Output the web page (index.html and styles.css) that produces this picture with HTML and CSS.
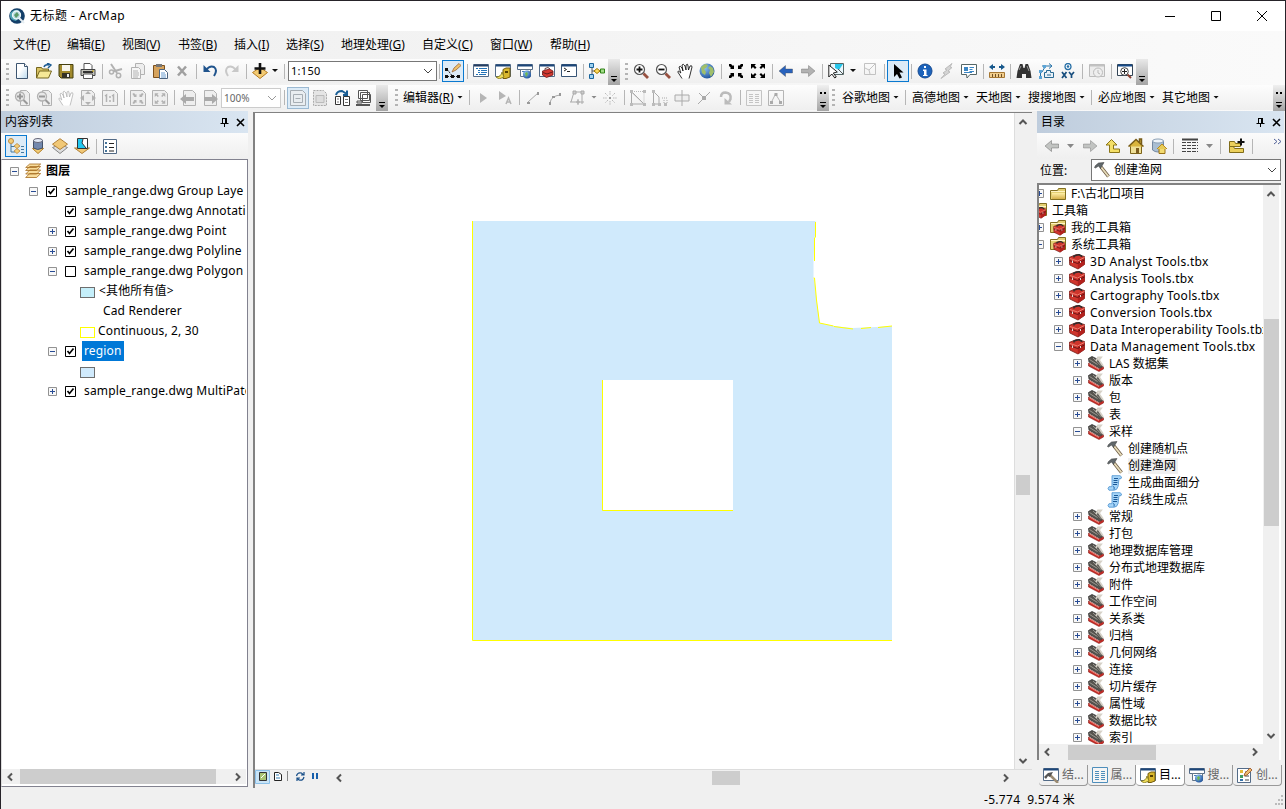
FILE: index.html
```html
<!DOCTYPE html>
<html lang="zh-CN">
<head>
<meta charset="utf-8">
<title>无标题 - ArcMap</title>
<link rel="stylesheet" href="styles.css">
</head>
<body>
<svg class="sprite" aria-hidden="true">
<defs>
<linearGradient id="gold" x1="0" y1="0" x2="0" y2="1"><stop offset="0" stop-color="#fff0a8"/><stop offset="1" stop-color="#d5b04a"/></linearGradient>
<linearGradient id="page" x1="0" y1="0" x2="1" y2="1"><stop offset=".4" stop-color="#fff"/><stop offset="1" stop-color="#b8d8ee"/></linearGradient>
<radialGradient id="globe" cx=".35" cy=".3" r=".8"><stop offset="0" stop-color="#8fc4f4"/><stop offset="1" stop-color="#174a94"/></radialGradient>
<symbol id="new" viewBox="0 0 16 16"><path d="M2.500 .5h8l3 3v12h-11z" fill="url(#page)" stroke="#3d5570"/><path d="M10.500 .5v3h3" fill="#fff" stroke="#3d5570"/></symbol>
<symbol id="open" viewBox="0 0 16 16"><path d="M.5 15V4.500h5l1 1.500h6v3" fill="#d9c364" stroke="#75661f"/><path d="M.5 15l3-7h12l-3 7z" fill="#f6e896" stroke="#75661f"/><path d="M8 4q1-3 5-2M11 0l4 2-3 3" fill="none" stroke="#1d5c94" stroke-width="1.500"/></symbol>
<symbol id="save" viewBox="0 0 16 16"><path d="M1 1.500h14v13.500H3l-2-2z" fill="#a18a2d" stroke="#45400f"/><path d="M4 2h8v6H4z" fill="#f7f5ed"/><path d="M4 10h8v5H4z" fill="#353326"/><path d="M9 11h2v3H9z" fill="#eee"/></symbol>
<symbol id="print" viewBox="0 0 16 16"><path d="M4 7V.5h6l2 2V7" fill="#fff" stroke="#555"/><path d="M1 6.500h14v6H1z" fill="#c4c4bc" stroke="#444"/><path d="M3 9h10" stroke="#333" stroke-width="2"/><path d="M3.500 11h9v4.500h-9z" fill="#fff" stroke="#555"/><path d="M12 8h2" stroke="#c8a400"/></symbol>
<symbol id="cut" viewBox="0 0 16 16"><path d="M3 1l6 9M14 6L5 8.500" fill="none" stroke="currentColor" stroke-width="2"/><circle cx="3.500" cy="9" r="2" fill="none" stroke="currentColor" stroke-width="1.500"/><circle cx="10.500" cy="12.500" r="2.200" fill="none" stroke="currentColor" stroke-width="1.500"/></symbol>
<symbol id="copy" viewBox="0 0 16 16"><path d="M5.500 .5h7l2 2v9h-9z" fill="#eee" stroke="currentColor"/><path d="M1.500 4.500h7l2 2v9h-9z" fill="#f6f6f6" stroke="currentColor"/><path d="M3 8h5M3 10h6M3 12h6M3 14h5" stroke="currentColor"/></symbol>
<symbol id="paste" viewBox="0 0 16 16"><path d="M1.500 2.500h11v12h-11z" fill="#d6a35d" stroke="#7c501d"/><path d="M4 1h6v3H4z" fill="#777"/><path d="M7.500 6.500h5l3 3v6h-8z" fill="#fff" stroke="#4c6480"/><path d="M9 10h4M9 12h5M9 14h5" stroke="#6d9ed0"/></symbol>
<symbol id="del" viewBox="0 0 16 16"><path d="M4 3.500l8 9M12 3.500l-8 9" stroke="#a0a0a0" stroke-width="2.500"/></symbol>
<symbol id="undo" viewBox="0 0 16 16"><path d="M1.500 2v7h7z" fill="#20548d"/><path d="M4 7q4-5 8-3 4 3 0 9" fill="none" stroke="#20548d" stroke-width="2"/></symbol>
<symbol id="redo" viewBox="0 0 16 16"><path d="M14.500 2v7h-7z" fill="#c8c8c8"/><path d="M12 7q-4-5-8-3-4 3 0 9" fill="none" stroke="#c8c8c8" stroke-width="2"/></symbol>
<symbol id="add" viewBox="0 0 16 16"><path d="M.5 9.500l7.500-5 7.500 5-7.500 6z" fill="#f3cb73" stroke="#b47c24"/><path d="M8 0v11M2.500 5.500h11" stroke="#111" stroke-width="2.600"/></symbol>
<symbol id="edit" viewBox="0 0 16 16"><path d="M2 6l6 8M2 13.500h12" fill="none" stroke="#222" stroke-dasharray="2 1"/><path d="M0 5h3v3H0zM0 12h3v3H0zM6 12h3v3H6zM12 12h3v3h-3z" fill="#111"/><path d="M7 9l2-4 5-4.500 2 2L11 7z" fill="#f0c36b" stroke="#9a6639" stroke-width=".8"/></symbol>
<symbol id="toc" viewBox="0 0 16 16"><path d="M.5 1.500h15v12H.5z" fill="#fff" stroke="#536b88"/><path d="M1 2.500h14" stroke="#243d61" stroke-width="2"/><path d="M3 5.500h2M6 5.500h8M5 7.500h2M8 7.500h6M5 9.500h2M8 9.500h6M3 11.500h2M6 11.500h7" stroke="#2474b8"/></symbol>
<symbol id="catalog" viewBox="0 0 16 16"><path d="M.5 1.500h15v12H.5z" fill="#fff" stroke="#536b88"/><path d="M1 2.500h14" stroke="#1d4679" stroke-width="2"/><path d="M8 6.500l3-1.500h4v9l-4 1.500H8z" fill="#d9b72d" stroke="#735b0c"/><path d="M1 14q5 0 6-5l2 5-5 2z" fill="#f0de5c" stroke="#7e721b" stroke-width=".8"/><path d="M10 8h3v2h-3z" fill="#554000"/></symbol>
<symbol id="search" viewBox="0 0 16 16"><path d="M.5 1.500h15v5H.5z" fill="#fff" stroke="#536b88"/><path d="M1 2.500h14" stroke="#1d4679" stroke-width="2"/><path d="M3.500 6.500h10v7h-10z" fill="#fff" stroke="#637487"/><path d="M5 8.500h7" stroke="#4980b7"/><circle cx="10" cy="11.500" r="4" fill="url(#globe)"/><path d="M8 10l2-1 1 2-2 3z" fill="#70b850"/></symbol>
<symbol id="toolwin" viewBox="0 0 16 16"><path d="M.5 1.500h15v12H.5z" fill="#fff" stroke="#536b88"/><path d="M1 2.500h14" stroke="#1d4679" stroke-width="2"/><path d="M3.500 8l7-2 3.500 2v4l-6.500 2.500-4-2.500z" fill="#d43830" stroke="#6b1716" stroke-width=".8"/><path d="M4 9.500l4 1.500 5.500-2M6 7V5.500l3-1L11 6" fill="none" stroke="#461717" stroke-width=".8"/></symbol>
<symbol id="python" viewBox="0 0 16 16"><path d="M.5 1.500h15v12H.5z" fill="#fff" stroke="#375476"/><path d="M1 2.500h14" stroke="#1d4679" stroke-width="2"/><path d="M3 5l2.500 1.500L3 8M6 8.500h3" fill="none" stroke="#222"/></symbol>
<symbol id="model" viewBox="0 0 16 16"><path d="M3 3v10M3 8h9" fill="none" stroke="#555"/><path d="M.5 .5h4v4h-4zM.5 11.500h4v4h-4z" fill="#9ed2f2" stroke="#19649c"/><path d="M5 8l3-2.500L11 8l-3 2.500z" fill="#ffdc5d" stroke="#9e7600"/><path d="M11.500 6h4v4h-4z" fill="#a2dd88" stroke="#308317"/></symbol>
<symbol id="zoomin" viewBox="0 0 16 16"><path d="M10.500 10.500l4.500 4.500" stroke="#985140" stroke-width="2.800"/><circle cx="6.500" cy="6.500" r="5" fill="#fff" stroke="#555" stroke-width="1.200"/><path d="M3.500 6.500h6M6.500 3.500v6" stroke="#111" stroke-width="1.800"/></symbol>
<symbol id="zoomout" viewBox="0 0 16 16"><path d="M10.500 10.500l4.500 4.500" stroke="#985140" stroke-width="2.800"/><circle cx="6.500" cy="6.500" r="5" fill="#fff" stroke="#555" stroke-width="1.200"/><path d="M3.500 6.500h6" stroke="#111" stroke-width="1.800"/></symbol>
<symbol id="hand" viewBox="0 0 16 16"><path d="M5 15.500L.8 9q0-2 3 1L2 4q1-2 3 1l1 3-1-6q1-2 3 1l1 4V2q2-2 2 1l.5 4L13 3q2-1 2 1l-2 8-1 3.500" fill="#fff" stroke="currentColor" stroke-width=".8"/></symbol>
<symbol id="world" viewBox="0 0 16 16"><circle cx="8" cy="8" r="7.500" fill="url(#globe)"/><path d="M2 4l4-3 3 1-2 3-2 1 2 3-1 3-3-2zM11 3l3 2 1 4-3 5-2-4 1-3-2-2z" fill="#a0bf6a"/></symbol>
<symbol id="shrink" viewBox="0 0 16 16"><path d="M1 1h2l2 2 1-1v4H2l1-1-2-2zM15 1h-2l-2 2-1-1v4h4l-1-1 2-2zM1 15h2l2-2 1 1v-4H2l1 1-2 2zM15 15h-2l-2-2-1 1v-4h4l-1 1 2 2z" fill="currentColor"/></symbol>
<symbol id="grow" viewBox="0 0 16 16"><path d="M1 1h5L4.500 2.500l2 2-1.500 1.500-2-2L1 6zM15 1h-5l1.500 1.500-2 2L11 6l2-2L15 6zM1 15h5l-1.500-1.500 2-2L5 10l-2 2L1 10zM15 15h-5l1.500-1.500-2-2L11 10l2 2 2-2z" fill="currentColor"/></symbol>
<symbol id="back" viewBox="0 0 16 16"><path d="M1 8l6.500-5.500v3.500h7v4h-7v3.500z" fill="currentColor" stroke="#3a3a3a" stroke-opacity=".35"/></symbol>
<symbol id="fwd" viewBox="0 0 16 16"><path d="M15 8L8.500 2.500v3.500h-7v4h7v3.500z" fill="currentColor" stroke="#444" stroke-opacity=".3"/></symbol>
<symbol id="select" viewBox="0 0 16 16"><path d="M2.500 .5h13v11h-13z" fill="#eaf6fb" stroke="#566"/><path d="M7 1h8l-4 6-4-2z" fill="#27c5e9"/><path d="M10 6l5 5" stroke="#555"/><path d="M.8 2v12l3-3 3 4 1.500-1-3-4 4-1z" fill="#fff" stroke="#222"/></symbol>
<symbol id="clear" viewBox="0 0 16 16"><path d="M2.500 .5h11v11h-11zM3 5l4 2 1 4M7 7l6-6" fill="none" stroke="#c2c2c2"/></symbol>
<symbol id="cursor" viewBox="0 0 16 16"><path d="M4 1v13l3-3 2.500 4.500 2.500-1-2.500-5h4z" fill="currentColor"/></symbol>
<symbol id="info" viewBox="0 0 16 16"><circle cx="8" cy="8" r="7" fill="#1c63bb" stroke="#164a91"/><path d="M7 3h2v2H7zM6 6.500h3.500V12h1v1H6v-1h1V8H6z" fill="#fff"/></symbol>
<symbol id="bolt" viewBox="0 0 16 16"><path d="M13 .5L6 6l2 1-4 3 2 1-4 4.500L11 9 9 8l4-3.500-2-.5z" fill="#d4d4d4" stroke="#bbb"/></symbol>
<symbol id="popup" viewBox="0 0 16 16"><path d="M.5 1.500h15v10H9l-3 3.500-.5-3.500h-5z" fill="#fff" stroke="#566"/><path d="M3 4h4v4H3z" fill="#3b86c4"/><path d="M8.500 4.500H13M8.500 6.500h3M8.500 8.500H13M3 9.500h8" stroke="#3b86c4"/></symbol>
<symbol id="measure" viewBox="0 0 16 16"><path d="M0 4l4-3v2h2v2H4v2zM16 4l-4-3v2h-2v2h2v2z" fill="#17588c"/><path d="M.5 9.500h15v5H.5z" fill="#f1cd8c" stroke="#a67732"/><path d="M3.500 14v-3M6.500 14v-3M9.500 14v-3M12.500 14v-3" stroke="#715025"/></symbol>
<symbol id="find" viewBox="0 0 16 16"><path d="M.5 15l1-7L4 1h2.500l1 4h1l1-4H12l2.500 7 1 7H10v-4H6v4z" fill="#333"/><path d="M3 7l2-4M11 3l2 5" stroke="#999"/></symbol>
<symbol id="route" viewBox="0 0 16 16"><path d="M2.500 14V9M4 3h9M11 .5L14 3l-3 2.500M4 9l3-5" fill="none" stroke="#2470a6"/><path d="M1 7h3v3H1zM1 13h3v3H1zM5 2h3v3H5z" fill="#5ca5d7"/><path d="M6.500 9.500h2v-2h4v2h3v5h-9z" fill="#e8f1f8" stroke="#286992"/><path d="M9 12h4" stroke="#286992"/></symbol>
<symbol id="xy" viewBox="0 0 16 16"><circle cx="8" cy="3.500" r="3" fill="#fff" stroke="#276fa6" stroke-width="1.300"/><circle cx="8" cy="3.500" r="1.300" fill="#276fa6"/><path d="M2 9l4.500 6M6.500 9L2 15M9 9l2.500 3L14 9M11.500 12v3" fill="none" stroke="#174d7d" stroke-width="1.700"/></symbol>
<symbol id="time" viewBox="0 0 16 16"><path d="M.5 1.500h15v12H.5z" fill="#ececec" stroke="#bbb"/><path d="M1 2.500h14" stroke="#c2c2c2" stroke-width="2"/><circle cx="9" cy="9.500" r="4.500" fill="#eee" stroke="#bbb"/><path d="M9 7v3l2 1" fill="none" stroke="#bbb"/></symbol>
<symbol id="viewer" viewBox="0 0 16 16"><path d="M.5 1.500h15v11H.5z" fill="#fff" stroke="#345"/><path d="M1 2.500h14" stroke="#174a88" stroke-width="2"/><path d="M10.500 11.500L14 15" stroke="#8a4031" stroke-width="2"/><circle cx="7.500" cy="8.500" r="3.800" fill="#fff" stroke="#444"/><path d="M5 8.500h5M7.500 6v5" stroke="#222"/></symbol>
<symbol id="pgzin" viewBox="0 0 16 16"><path d="M6.500 .5h6l3 3v12h-9z" fill="#eee" stroke="currentColor"/><circle cx="6" cy="6.500" r="4.500" fill="#e8e8e8" stroke="currentColor" stroke-width="1.300"/><path d="M3 6.500h6M6 3.500v6M9.500 10l4 4" stroke="#999" stroke-width="2"/></symbol>
<symbol id="pgzout" viewBox="0 0 16 16"><path d="M6.500 .5h6l3 3v12h-9z" fill="#eee" stroke="currentColor"/><circle cx="6" cy="6.500" r="4.500" fill="#e8e8e8" stroke="currentColor" stroke-width="1.300"/><path d="M3 6.500h6M9.500 10l4 4" stroke="#999" stroke-width="2"/></symbol>
<symbol id="pgfull" viewBox="0 0 16 16"><path d="M1.500 .5h10l3 3v12h-13z" fill="#eee" stroke="currentColor"/><path d="M8 1l3 3H5zM8 15l3-3H5zM0 8l4-3v6zM16 8l-4-3v6z" fill="currentColor"/></symbol>
<symbol id="pg11" viewBox="0 0 16 16"><path d="M.5 .5h12l3 3v12H.5z" fill="#f0f0f0" stroke="currentColor"/><path d="M3 6l1.500-1v7M8 6v2M8 10v2M10 6l1.500-1v7" fill="none" stroke="currentColor" stroke-width="1.500"/></symbol>
<symbol id="pgshrink" viewBox="0 0 16 16"><path d="M.5 .5h12l3 3v12H.5z" fill="#eee" stroke="currentColor"/><svg x="2" y="2.500" width="12" height="12" viewBox="0 0 16 16"><use href="#shrink"/></svg></symbol>
<symbol id="pggrow" viewBox="0 0 16 16"><path d="M.5 .5h12l3 3v12H.5z" fill="#eee" stroke="currentColor"/><svg x="2" y="2.500" width="12" height="12" viewBox="0 0 16 16"><use href="#grow"/></svg></symbol>
<symbol id="pgback" viewBox="0 0 16 16"><path d="M3.500 .5h9l3 3v12h-12z" fill="#eee" stroke="currentColor"/><path d="M0 9l6-5v3h8v4H6v3z" fill="#aaa"/></symbol>
<symbol id="pgfwd" viewBox="0 0 16 16"><path d="M2.500 .5h9l3 3v12h-12z" fill="#eee" stroke="currentColor"/><path d="M16 9l-6-5v3H2v4h8v3z" fill="#aaa"/></symbol>
<symbol id="draft" viewBox="0 0 16 16"><path d="M.5 .5h12l3 3v12H.5z" fill="#e9edf0" stroke="#a6adb3"/><path d="M3.500 4.500h9v8h-9zM5.500 8.500h5" fill="none" stroke="#a6adb3"/></symbol>
<symbol id="focus" viewBox="0 0 16 16"><path d="M1.500 .5h10l3 3v12h-13z" fill="#e5e5e5" stroke="#aaa" stroke-dasharray="2 1"/><path d="M4 5.500h8v7H4z" fill="#ddd" stroke="#bbb"/></symbol>
<symbol id="swap" viewBox="0 0 16 16"><path d="M1.500 6.500h5v8h-5zM9.500 6.500h6v9h-6z" fill="#fff" stroke="#333"/><path d="M3 9h2M3 12h2M11 9.500h3M11 12.500h3" stroke="#777"/><path d="M2 5q1-4 6-4l4 2.500M9 5h4V.5" fill="none" stroke="#195d94" stroke-width="2"/></symbol>
<symbol id="pages" viewBox="0 0 16 16"><path d="M2.500 .5h9v8h-9zM4.500 2.500h9v8h-9zM6.500 4.500h8v8h-8z" fill="#fff" stroke="#555"/><path d="M1 11h5v2H1z" fill="#ddd" stroke="#555"/><path d="M0 15h14" stroke="#555" stroke-width="2"/></symbol>
<symbol id="play" viewBox="0 0 16 16"><path d="M5 3l7 5-7 5z" fill="#b5b5b5"/></symbol>
<symbol id="playa" viewBox="0 0 16 16"><path d="M2 1l7 5-7 4z" fill="#b5b5b5"/><path d="M9 14l2.500-6 2.500 6M10 12h3" fill="none" stroke="#b5b5b5" stroke-width="1.500"/></symbol>
<symbol id="line" viewBox="0 0 16 16"><path d="M3 12L13 3" stroke="#aaa"/><path d="M2 12h3v2H2zM12 2h2v3h-2z" fill="#999"/></symbol>
<symbol id="arc" viewBox="0 0 16 16"><path d="M3 13q1-7 10-8" fill="none" stroke="#aaa"/><path d="M2 12h2v3H2zM5 6h3v2H5zM12 3h2v3h-2z" fill="#999"/></symbol>
<symbol id="trace" viewBox="0 0 16 16"><path d="M2 12L5 2h8v12M1 12h5M6 12h9M9 9v6" fill="none" stroke="#aaa"/><path d="M4 1h3v3H4zM12 1h3v3h-3zM8 11h2v2H8z" fill="#ccc" stroke="#aaa"/></symbol>
<symbol id="burst" viewBox="0 0 16 16"><path d="M8 1v4M8 11v4M1 8h4M11 8h4M3 3l3 3M10 10l3 3M13 3l-3 3M6 10l-3 3" stroke="#bbb" stroke-dasharray="1.500 .7"/><path d="M7 7h2v2H7z" fill="#999"/></symbol>
<symbol id="reshape" viewBox="0 0 16 16"><path d="M1.500 2v12H14zM2 2l12 12" fill="none" stroke="#aaa"/><path d="M2 1.500h12V13" fill="none" stroke="#bbb" stroke-dasharray="1 1"/><path d="M0 0h3v3H0zM13 0h3v3h-3zM0 13h3v3H0zM13 13h3v3h-3z" fill="#bbb"/></symbol>
<symbol id="cutpoly" viewBox="0 0 16 16"><path d="M1.500 2v12H7V7L2 2" fill="none" stroke="#aaa"/><path d="M10 8h5M12 10v4M15 10v4" fill="none" stroke="#aaa" stroke-dasharray="1 1"/><path d="M0 0h3v3H0zM0 13h3v3H0zM6 13h3v3H6zM12 13h3v3h-3z" fill="#bbb"/></symbol>
<symbol id="split" viewBox="0 0 16 16"><path d="M1 5h14v6H1zM8 0v16" fill="#eee" stroke="#aaa"/></symbol>
<symbol id="slash" viewBox="0 0 16 16"><path d="M2 14L14 2M3 3l4 4" stroke="#aaa"/><path d="M6 6h4v4H6z" fill="#aaa"/></symbol>
<symbol id="rotate" viewBox="0 0 16 16"><path d="M3 7q0-4.500 4.500-4.500 6 .5 5 6.500l-1.500 3" fill="none" stroke="#bbb" stroke-width="2.500"/><path d="M6.500 8v6.500H14z" fill="#bbb"/></symbol>
<symbol id="attrs" viewBox="0 0 16 16"><path d="M.5 .5h15v15H.5z" fill="#f5f5f5" stroke="currentColor"/><path d="M3 4.500h4M9 4.500h4M3 6.500h4M9 6.500h4M3 8.500h4M9 8.500h4M3 10.500h4M9 10.500h4M3 12.500h4M9 12.500h4" stroke="currentColor"/></symbol>
<symbol id="sketch" viewBox="0 0 16 16"><path d="M.5 .5h15v15H.5zM3.500 12l4-8 5 8" fill="none" stroke="#b5b5b5"/><path d="M2 11h3v3H2zM6.500 3h3v3h-3zM11 11h3v3h-3z" fill="#aaa"/></symbol>
<symbol id="folder" viewBox="0 0 16 16"><path d="M.5 13.500v-9h7l1-2h7v11z" fill="#e3d073" stroke="#826f20"/><path d="M2 7h13v6H2z" fill="url(#gold)"/><path d="M1 5.500h14" stroke="#fff4c4"/></symbol>
<symbol id="box" viewBox="0 0 16 16"><path d="M0 3.500L7.500 .5l8 2v8L9 15 .8 11z" fill="#cf352c" stroke="#722019" stroke-width=".8"/><path d="M8.500 7l7-3v6.500L9 15z" fill="#b3211d"/><path d="M1 4.500l7.500 2.500 7-3.500" fill="none" stroke="#ef7f70"/><path d="M.5 6.500l8 3 7-3.500" fill="none" stroke="#681616"/><path d="M5 3.500V2l5-1.500 2.500 1.500v1" fill="none" stroke="#2d2d2d" stroke-width="1.500"/><path d="M3.500 6.500v2.500M11.500 7v2" stroke="#e4dcd8"/></symbol>
<symbol id="boxfolder" viewBox="0 0 16 16"><path d="M.5 12.500v-10h7l1-2h7v12z" fill="#e3d073" stroke="#826f20"/><path d="M1 3.500h14" stroke="#fff4c4"/><svg x="3" y="4" width="12.500" height="12" viewBox="0 0 16 16"><use href="#box"/></svg></symbol>
<symbol id="toolset" viewBox="0 0 16 16"><path d="M.5 2.500L4 .5l6 3 5 7-3 2L1 6z" fill="#56534e" stroke="#333" stroke-width=".8"/><path d="M1.500 3.500l8 5M5 2l8 7.500" stroke="#9a9890"/><path d="M8 5l2-3.500h3l-2 2.500 4 6" fill="none" stroke="#d6d1c7" stroke-width="1.800"/><path d="M.5 7l10.500 6 4.500-2v2l-4.500 2.500-10.500-5.500z" fill="#c82a25" stroke="#8a211d" stroke-width=".6"/><path d="M1.500 8l9.500 5.500" stroke="#ed8a7e"/></symbol>
<symbol id="hammer" viewBox="0 0 16 16"><path d="M7 5l7.500 9.500" stroke="#6c5a43" stroke-width="3.400"/><path d="M7 5l7.500 9.500" stroke="#e8ddbb" stroke-width="1.900"/><path d="M.5 5.500l1-2 3-2.500L10 .5 8.500 3 6.500 6.500 4.500 4 1.500 6z" fill="#61686b" stroke="#333" stroke-width=".5"/></symbol>
<symbol id="script" viewBox="0 0 16 16"><path d="M5 .7h8q2.500 1 1 3H12l-1 8q-1 3.500-4 3.500H2q-2-1.500 0-3.500h3z" fill="#a6d5f8" stroke="#4a90cf" stroke-width=".8"/><path d="M6 11.500q2 0 1 3" fill="none" stroke="#286daf"/><path d="M7 3.500h4M6.500 5.500h4M6.500 7.500h4M6 9.500h4" stroke="#195796"/></symbol>
<symbol id="layers" viewBox="0 0 16 16"><path d="M.7 14.500l4-4h11l-4 4zM.7 11l4-4h11l-4 4zM.7 7.500l4-4h11l-4 4zM.7 4.500l4-3.500h11l-4 3.500z" fill="#f8dc9b" stroke="#a66c21" stroke-width=".8"/></symbol>
<symbol id="plus" viewBox="0 0 9 9"><path d="M.5 .5h8v8h-8z" fill="#f8f8f8" stroke="#929292"/><path d="M2 4.500h5M4.500 2v5" stroke="#284c95"/></symbol>
<symbol id="minus" viewBox="0 0 9 9"><path d="M.5 .5h8v8h-8z" fill="#f8f8f8" stroke="#929292"/><path d="M2 4.500h5" stroke="#284c95"/></symbol>
<symbol id="on" viewBox="0 0 11 11"><path d="M.5 .5h10v10H.5z" fill="#fff" stroke="#000"/><path d="M2.500 5l2 2.500 4-5" fill="none" stroke="#000" stroke-width="1.700"/></symbol>
<symbol id="off" viewBox="0 0 11 11"><path d="M.5 .5h10v10H.5z" fill="#fff" stroke="#000"/></symbol>
<symbol id="chev" viewBox="0 0 10 10"><path d="M1 3l4 4 4-4" fill="none" stroke="currentColor"/></symbol>
<symbol id="chevb" viewBox="0 0 10 10"><path d="M1.500 3l3.500 3.500L8.500 3" fill="none" stroke="currentColor" stroke-width="2"/></symbol>
<symbol id="pin" viewBox="0 0 9 9"><path d="M2 .5h5M2.500 0v5.500M5.500 0v5.500M6.500 0v5.500M.5 5.500h8M4.500 6v3" fill="none" stroke="#000"/></symbol>
<symbol id="close" viewBox="0 0 9 9"><path d="M1 1l7 7M8 1L1 8" stroke="#000" stroke-width="1.600"/></symbol>
<symbol id="order" viewBox="0 0 16 16"><circle cx="3" cy="3" r="2.500" fill="#f2ce79" stroke="#bd8740"/><path d="M3 6v8h4M3 8.500h4M13 8.500h3M13 11.500h3M13 14.500h3" fill="none" stroke="#45789f"/><path d="M6 8l3-2.500L12 8l-3 2.500zM6 13l3-2.500 3 2.500-3 2.500z" fill="#f2ce79" stroke="#bd8740" stroke-width=".8"/></symbol>
<symbol id="source" viewBox="0 0 16 16"><path d="M2.500 10.500L8 15.500l5.500-5z" fill="#f3cd76" stroke="#b07a22"/><path d="M3.500 2v8q4 3 9 0V2" fill="#7288ad" stroke="#445269"/><ellipse cx="8" cy="2.500" rx="4.500" ry="2" fill="#e0e9f6" stroke="#667"/></symbol>
<symbol id="vis" viewBox="0 0 16 16"><path d="M.5 9.500l7.500 6 7.500-6-7.500-3z" fill="#ddd" stroke="#888"/><path d="M.5 6.200L8 .7l7.500 5.500L8 11.500z" fill="#f1c876" stroke="#b18037"/></symbol>
<symbol id="sel2" viewBox="0 0 16 16"><path d="M.5 10l7.500 5.500 7.500-5.500z" fill="#f1c876" stroke="#b18037"/><path d="M3.500 .5h10v10h-10z" fill="#fff" stroke="#333"/><path d="M4 1h5L8 5l4 5H4z" fill="#22c8ef"/><path d="M9 1L8 5l4 5" fill="none" stroke="#333"/></symbol>
<symbol id="opts" viewBox="0 0 16 16"><path d="M1.500 1.500h13v14h-13z" fill="#fff" stroke="#526a86"/><path d="M7 5.500h5M7 9.500h5M7 13h5" stroke="#222"/><path d="M3 4h2v2H3zM3 8h2v2H3zM3 12h2v2H3z" fill="#46749a"/></symbol>
<symbol id="up" viewBox="0 0 16 16"><path d="M1 7l5.500-5.500L12 7H8.500v4h6v3.500H4.500V7z" fill="#f4df67" stroke="#8b7619"/></symbol>
<symbol id="home" viewBox="0 0 16 16"><path d="M2.500 7h11v8.500h-11z" fill="#eedf96" stroke="#7d641a"/><path d="M.5 8.500L8 1.500l7.500 7M11.500 4V1h2v5" fill="#d9b43c" stroke="#765b18" stroke-width="1.500"/><path d="M8 10h3v5H8z" fill="#7c5c1e"/></symbol>
<symbol id="dbhome" viewBox="0 0 16 16"><path d="M1.500 3v9q5 4 11 0V3z" fill="#a9bed2" stroke="#7488a0"/><ellipse cx="7" cy="3" rx="5.500" ry="2" fill="#eef4fa" stroke="#8ba0b5"/><path d="M8 10.500h6v5H8z" fill="#f3db70" stroke="#997116"/><path d="M6 11l5-5 5 5" fill="#e7cb57" stroke="#b88b20"/></symbol>
<symbol id="list" viewBox="0 0 16 16"><path d="M0 1.500h16" stroke="#444" stroke-width="2"/><path d="M0 4.500h16M0 7.500h16M0 10.500h16M0 13.500h16" stroke="#444" stroke-dasharray="4 1"/></symbol>
<symbol id="folderplus" viewBox="0 0 16 16"><path d="M.5 3.500h5l1 2h5v3h-11zM.5 8.500h4l1 2h9v4h-14z" fill="#ebcf5b" stroke="#806c19"/><path d="M12 .5v7M8.500 4h7" stroke="#111" stroke-width="2"/></symbol>
<symbol id="results" viewBox="0 0 16 16"><path d="M.5 1.500h15v12H.5z" fill="#fff" stroke="#536b88"/><path d="M1 2.500h14" stroke="#1d4679" stroke-width="2"/><path d="M7 8l8 8" stroke="#9b8b72" stroke-width="2.500"/><path d="M1 10l4-4 5-1-3 5-2-1-2 3z" fill="#555"/></symbol>
<symbol id="create" viewBox="0 0 16 16"><path d="M.5 1.500h13v14H.5z" fill="#fff" stroke="#536b88"/><path d="M3 3h3v3H3z" fill="#e6ba39"/><path d="M3 8h3v3H3z" fill="#429c61"/><path d="M3 12h3v2H3z" fill="#3772aa"/><path d="M8 5h4M8 9h4M8 13h4" stroke="#444"/><path d="M7 9l1-3 5-5 2 2-5 5z" fill="#edbd71" stroke="#a66338"/></symbol>
<symbol id="applogo" viewBox="0 0 16 16"><circle cx="8" cy="8" r="7.800" fill="#143f69"/><path d="M1 5q4-4 8-3l3 4-5 7q-6-1-6-5" fill="#4ea3b4"/><path d="M10 10l5 5" stroke="#e4edf2" stroke-width="2"/><circle cx="7.500" cy="7" r="4" fill="#b9dce1" stroke="#eef7fa" stroke-width="1.300"/><path d="M5 7l3-3 2 3-3 3z" fill="#5b9a68"/></symbol>
</defs>
</svg>

<div class="app">
<header class="titlebar"><svg class="i"><use href="#applogo"/></svg><span>无标题 - ArcMap</span>
<svg class="winbtns" viewBox="0 0 104 12"><path d="M1 6.500h10M47.500 1.500h9v9h-9zM93 1l10 10M103 1L93 11" fill="none" stroke="#000"/></svg></header>
<nav class="menu"><span>文件(<u>F</u>)</span><span>编辑(<u>E</u>)</span><span>视图(<u>V</u>)</span><span>书签(<u>B</u>)</span><span>插入(<u>I</u>)</span><span>选择(<u>S</u>)</span><span>地理处理(<u>G</u>)</span><span>自定义(<u>C</u>)</span><span>窗口(<u>W</u>)</span><span>帮助(<u>H</u>)</span></nav>

<div class="bars">
<div class="bar main"><i class="grip"></i><b class="t"><svg><use href="#new"/></svg></b><b class="t"><svg><use href="#open"/></svg></b><b class="t"><svg><use href="#save"/></svg></b><b class="t"><svg><use href="#print"/></svg></b><i class="sep"></i><b class="t dis"><svg><use href="#cut"/></svg></b><b class="t dis"><svg><use href="#copy"/></svg></b><b class="t"><svg><use href="#paste"/></svg></b><b class="t"><svg><use href="#del"/></svg></b><i class="sep"></i><b class="t"><svg><use href="#undo"/></svg></b><b class="t"><svg><use href="#redo"/></svg></b><i class="sep"></i><b class="t"><svg><use href="#add"/></svg></b><i class="drop wide"></i><i class="sep"></i><div class="combo scale"><span>1:150</span><svg><use href="#chev"/></svg></div><i class="sep s5"></i><b class="t act"><svg><use href="#edit"/></svg></b><i class="sep"></i><b class="t"><svg><use href="#toc"/></svg></b><b class="t"><svg><use href="#catalog"/></svg></b><b class="t"><svg><use href="#search"/></svg></b><b class="t"><svg><use href="#toolwin"/></svg></b><b class="t"><svg><use href="#python"/></svg></b><i class="sep"></i><b class="t"><svg><use href="#model"/></svg></b><i class="over"></i></div>
<div class="bar tools"><i class="grip"></i><b class="t"><svg><use href="#zoomin"/></svg></b><b class="t"><svg><use href="#zoomout"/></svg></b><b class="t"><svg><use href="#hand"/></svg></b><b class="t"><svg><use href="#world"/></svg></b><i class="sep s7"></i><b class="t"><svg><use href="#shrink"/></svg></b><b class="t"><svg><use href="#grow"/></svg></b><i class="sep"></i><b class="t blue"><svg><use href="#back"/></svg></b><b class="t dis"><svg><use href="#fwd"/></svg></b><i class="sep"></i><b class="t"><svg><use href="#select"/></svg></b><i class="drop"></i><b class="t"><svg><use href="#clear"/></svg></b><i class="sep"></i><b class="t act"><svg><use href="#cursor"/></svg></b><i class="sep s5"></i><b class="t"><svg><use href="#info"/></svg></b><b class="t"><svg><use href="#bolt"/></svg></b><b class="t"><svg><use href="#popup"/></svg></b><i class="sep"></i><b class="t"><svg><use href="#measure"/></svg></b><i class="sep s5"></i><b class="t"><svg><use href="#find"/></svg></b><b class="t"><svg><use href="#route"/></svg></b><b class="t"><svg><use href="#xy"/></svg></b><i class="sep s7"></i><b class="t"><svg><use href="#time"/></svg></b><i class="sep"></i><b class="t"><svg><use href="#viewer"/></svg></b><i class="over"></i></div>
</div>

<div class="bars">
<div class="bar dis layout"><i class="grip"></i><b class="t"><svg><use href="#pgzin"/></svg></b><b class="t"><svg><use href="#pgzout"/></svg></b><b class="t"><svg><use href="#hand"/></svg></b><b class="t"><svg><use href="#pgfull"/></svg></b><b class="t"><svg><use href="#pg11"/></svg></b><i class="sep"></i><b class="t"><svg><use href="#pgshrink"/></svg></b><b class="t"><svg><use href="#pggrow"/></svg></b><i class="sep"></i><b class="t"><svg><use href="#pgback"/></svg></b><b class="t"><svg><use href="#pgfwd"/></svg></b><div class="combo pct"><span>100%</span><svg><use href="#chev"/></svg></div><i class="sep"></i><b class="t act"><svg><use href="#draft"/></svg></b><b class="t"><svg><use href="#focus"/></svg></b><b class="t"><svg><use href="#swap"/></svg></b><b class="t"><svg><use href="#pages"/></svg></b><i class="over"></i></div>
<div class="bar editor"><i class="grip"></i><span class="lbl">编辑器(<u>R</u>)</span><i class="drop sm"></i><i class="sep"></i><b class="t"><svg><use href="#play"/></svg></b><b class="t"><svg><use href="#playa"/></svg></b><i class="sep"></i><b class="t"><svg><use href="#line"/></svg></b><b class="t"><svg><use href="#arc"/></svg></b><b class="t"><svg><use href="#trace"/></svg></b><i class="drop gray"></i><b class="t"><svg><use href="#burst"/></svg></b><i class="sep"></i><b class="t"><svg><use href="#reshape"/></svg></b><b class="t"><svg><use href="#cutpoly"/></svg></b><b class="t"><svg><use href="#split"/></svg></b><b class="t"><svg><use href="#slash"/></svg></b><b class="t"><svg><use href="#rotate"/></svg></b><i class="sep"></i><b class="t pale"><svg><use href="#attrs"/></svg></b><b class="t"><svg><use href="#sketch"/></svg></b><i class="over more"></i></div>
<div class="bar maps"><i class="grip"></i><span class="lbl">谷歌地图</span><i class="drop"></i><i class="sep"></i><span class="lbl">高德地图</span><i class="drop"></i><span class="lbl">天地图</span><i class="drop"></i><span class="lbl">搜搜地图</span><i class="drop"></i><i class="sep"></i><span class="lbl">必应地图</span><i class="drop"></i><span class="lbl">其它地图</span><i class="drop"></i><i class="over more"></i></div>
</div>

<main class="work">
<section class="panel left">
<div class="head"><span>内容列表</span><svg><use href="#pin"/></svg><svg><use href="#close"/></svg></div>
<div class="ptools"><b class="t act"><svg><use href="#order"/></svg></b><b class="t"><svg><use href="#source"/></svg></b><b class="t"><svg><use href="#vis"/></svg></b><b class="t"><svg><use href="#sel2"/></svg></b><i class="sep"></i><b class="t"><svg><use href="#opts"/></svg></b></div>
<div class="toc">
<div class="rows">
<div class="r a0"><svg class="x"><use href="#minus"/></svg><svg class="i"><use href="#layers"/></svg><strong>图层</strong></div>
<div class="r a1"><svg class="x"><use href="#minus"/></svg><svg class="c"><use href="#on"/></svg><span>sample_range.dwg Group Laye</span></div>
<div class="r a2"><i class="x"></i><svg class="c"><use href="#on"/></svg><span>sample_range.dwg Annotati</span></div>
<div class="r a2"><svg class="x"><use href="#plus"/></svg><svg class="c"><use href="#on"/></svg><span>sample_range.dwg Point</span></div>
<div class="r a2"><svg class="x"><use href="#plus"/></svg><svg class="c"><use href="#on"/></svg><span>sample_range.dwg Polyline</span></div>
<div class="r a2"><svg class="x"><use href="#minus"/></svg><svg class="c"><use href="#off"/></svg><span>sample_range.dwg Polygon</span></div>
<div class="r a3"><i class="sw cyan"></i><span>&lt;其他所有值&gt;</span></div>
<div class="r cad"><span>Cad Renderer</span></div>
<div class="r a3"><i class="sw yel"></i><span>Continuous, 2, 30</span></div>
<div class="r a2"><svg class="x"><use href="#minus"/></svg><svg class="c"><use href="#on"/></svg><span class="hot">region</span></div>
<div class="r a3"><i class="sw"></i></div>
<div class="r a2"><svg class="x"><use href="#plus"/></svg><svg class="c"><use href="#on"/></svg><span>sample_range.dwg MultiPatc</span></div>
</div>
<div class="hs"><svg class="l"><use href="#chevb"/></svg><i></i><svg class="rt"><use href="#chevb"/></svg></div>
</div>
</section>

<section class="map">
<svg class="canvas" viewBox="255 113 759 656"><path d="M472 221h343.500v15l-1 1-1 24v18l1 1 2 19 3 24 14 3 19 2 24-1 15.500-1V640H472z" fill="#d0eafc"/><path d="M602 380h131v130H602z" fill="#fff"/><path d="M472.500 221v419.500H892M602.500 380v130.500H733M815.500 222v15l-1 1v23M813.500 278l1 0 2 22 3 23 14 3M834 326.500l19 2.500M861 328.500l10-1M878 327.500l14-1.500" fill="none" stroke="#ff0"/></svg>
<div class="vs"><svg class="u"><use href="#chevb"/></svg><i></i><svg><use href="#chevb"/></svg></div>
<div class="mapfoot"><svg class="views" viewBox="0 0 68 15"><path d="M.5 .5h14v13H.5z" fill="#c9e4f7" stroke="#8bc0e8"/><path d="M4.500 2.500h7v8h-7z" fill="#a9c474" stroke="#333"/><path d="M6 8l4-4" stroke="#fff"/><path d="M19.500 2.500h4l3 2v6h-7z" fill="#fff" stroke="#222"/><path d="M21 5h3M21 8h4" stroke="#3580b5"/><path d="M32.500 1v10" stroke="#888"/><path d="M41.500 6q1-4 5-3l2 2M49 7q-1 4-5 3l-2-2M49 2v3h-3M42 11V8h3" fill="none" stroke="#174e88" stroke-width="1.200"/><path d="M58 3v6M62 3v6" stroke="#1760ac" stroke-width="2"/></svg><svg class="l"><use href="#chevb"/></svg><i></i><svg class="rt"><use href="#chevb"/></svg></div>
</section>

<section class="panel right">
<div class="head"><span>目录</span><svg><use href="#pin"/></svg><svg><use href="#close"/></svg></div>
<div class="ptools"><b class="t silver"><svg><use href="#back"/></svg></b><i class="drop gray"></i><b class="t silver"><svg><use href="#fwd"/></svg></b><b class="t"><svg><use href="#up"/></svg></b><b class="t"><svg><use href="#home"/></svg></b><b class="t"><svg><use href="#dbhome"/></svg></b><i class="sep s7"></i><b class="t list"><svg><use href="#list"/></svg></b><i class="drop gray"></i><i class="sep s7"></i><b class="t list"><svg><use href="#folderplus"/></svg></b><i class="sep"></i><svg class="chevs" viewBox="0 0 9 7"><path d="M1 1l3 2.500-3 2.500M5 1l3 2.500-3 2.500" fill="none" stroke="#526299"/></svg></div>
<div class="loc"><label>位置:</label><div class="combo"><svg class="i"><use href="#hammer"/></svg><span>创建渔网</span><svg><use href="#chev"/></svg></div></div>
<div class="tree">
<div class="rows">
<div class="r b1"><svg class="x"><use href="#plus"/></svg><svg class="i"><use href="#folder"/></svg><span>F:\古北口项目</span></div>
<div class="r b0"><svg class="i"><use href="#boxfolder"/></svg><span>工具箱</span></div>
<div class="r b1"><svg class="x"><use href="#plus"/></svg><svg class="i"><use href="#boxfolder"/></svg><span>我的工具箱</span></div>
<div class="r b1"><svg class="x"><use href="#minus"/></svg><svg class="i"><use href="#boxfolder"/></svg><span>系统工具箱</span></div>
<div class="r b2"><svg class="x"><use href="#plus"/></svg><svg class="i"><use href="#box"/></svg><span>3D Analyst Tools.tbx</span></div>
<div class="r b2"><svg class="x"><use href="#plus"/></svg><svg class="i"><use href="#box"/></svg><span>Analysis Tools.tbx</span></div>
<div class="r b2"><svg class="x"><use href="#plus"/></svg><svg class="i"><use href="#box"/></svg><span>Cartography Tools.tbx</span></div>
<div class="r b2"><svg class="x"><use href="#plus"/></svg><svg class="i"><use href="#box"/></svg><span>Conversion Tools.tbx</span></div>
<div class="r b2"><svg class="x"><use href="#plus"/></svg><svg class="i"><use href="#box"/></svg><span>Data Interoperability Tools.tbx</span></div>
<div class="r b2"><svg class="x"><use href="#minus"/></svg><svg class="i"><use href="#box"/></svg><span>Data Management Tools.tbx</span></div>
<div class="r b3"><svg class="x"><use href="#plus"/></svg><svg class="i"><use href="#toolset"/></svg><span>LAS 数据集</span></div>
<div class="r b3"><svg class="x"><use href="#plus"/></svg><svg class="i"><use href="#toolset"/></svg><span>版本</span></div>
<div class="r b3"><svg class="x"><use href="#plus"/></svg><svg class="i"><use href="#toolset"/></svg><span>包</span></div>
<div class="r b3"><svg class="x"><use href="#plus"/></svg><svg class="i"><use href="#toolset"/></svg><span>表</span></div>
<div class="r b3"><svg class="x"><use href="#minus"/></svg><svg class="i"><use href="#toolset"/></svg><span>采样</span></div>
<div class="r b4"><svg class="i"><use href="#hammer"/></svg><span>创建随机点</span></div>
<div class="r b4"><svg class="i"><use href="#hammer"/></svg><span class="soft">创建渔网</span></div>
<div class="r b4"><svg class="i"><use href="#script"/></svg><span>生成曲面细分</span></div>
<div class="r b4"><svg class="i"><use href="#script"/></svg><span>沿线生成点</span></div>
<div class="r b3"><svg class="x"><use href="#plus"/></svg><svg class="i"><use href="#toolset"/></svg><span>常规</span></div>
<div class="r b3"><svg class="x"><use href="#plus"/></svg><svg class="i"><use href="#toolset"/></svg><span>打包</span></div>
<div class="r b3"><svg class="x"><use href="#plus"/></svg><svg class="i"><use href="#toolset"/></svg><span>地理数据库管理</span></div>
<div class="r b3"><svg class="x"><use href="#plus"/></svg><svg class="i"><use href="#toolset"/></svg><span>分布式地理数据库</span></div>
<div class="r b3"><svg class="x"><use href="#plus"/></svg><svg class="i"><use href="#toolset"/></svg><span>附件</span></div>
<div class="r b3"><svg class="x"><use href="#plus"/></svg><svg class="i"><use href="#toolset"/></svg><span>工作空间</span></div>
<div class="r b3"><svg class="x"><use href="#plus"/></svg><svg class="i"><use href="#toolset"/></svg><span>关系类</span></div>
<div class="r b3"><svg class="x"><use href="#plus"/></svg><svg class="i"><use href="#toolset"/></svg><span>归档</span></div>
<div class="r b3"><svg class="x"><use href="#plus"/></svg><svg class="i"><use href="#toolset"/></svg><span>几何网络</span></div>
<div class="r b3"><svg class="x"><use href="#plus"/></svg><svg class="i"><use href="#toolset"/></svg><span>连接</span></div>
<div class="r b3"><svg class="x"><use href="#plus"/></svg><svg class="i"><use href="#toolset"/></svg><span>切片缓存</span></div>
<div class="r b3"><svg class="x"><use href="#plus"/></svg><svg class="i"><use href="#toolset"/></svg><span>属性域</span></div>
<div class="r b3"><svg class="x"><use href="#plus"/></svg><svg class="i"><use href="#toolset"/></svg><span>数据比较</span></div>
<div class="r b3"><svg class="x"><use href="#plus"/></svg><svg class="i"><use href="#toolset"/></svg><span>索引</span></div>
</div>
<div class="vs"><svg class="u"><use href="#chevb"/></svg><i></i><svg><use href="#chevb"/></svg></div>
<div class="hs"><svg class="l"><use href="#chevb"/></svg><i></i><svg class="rt"><use href="#chevb"/></svg></div>
</div>
<div class="tabs"><span><svg class="i"><use href="#results"/></svg>结...</span><span class="blueish"><svg class="i"><use href="#attrs"/></svg>属...</span><span class="cur"><svg class="i"><use href="#catalog"/></svg>目...</span><span><svg class="i"><use href="#search"/></svg>搜...</span><span><svg class="i"><use href="#create"/></svg>创...</span></div>
</section>
</main>
<footer class="status"><span>-5.774&nbsp; 9.574 米</span><svg viewBox="0 0 10 10"><path d="M7 0h2v2H7zM4 4h2v2H4zM7 4h2v2H7zM1 8h2v2H1zM4 8h2v2H4zM7 8h2v2H7z" fill="#bbb"/></svg></footer>
</div>
</body>
</html>
```

FILE: styles.css
```css
* { box-sizing: border-box; }
html, body { margin: 0; height: 100%; overflow: hidden; }
body { font: 12px/16px "Noto Sans", "Noto Sans CJK SC", sans-serif; color: #000; }
svg { display: block; flex: none; }
i { display: block; flex: none; font-style: normal; }
.sprite { position: absolute; width: 0; height: 0; }
.app { width: 1286px; height: 809px; display: flex; flex-direction: column; background: #f0f0f0; border: 1px solid #262329; border-width: 1px 1px 0 1px; }
.i { width: 16px; height: 16px; }

.titlebar { height: 30px; flex: none; background: #fff; display: flex; align-items: center; padding: 0 17px 0 8px; }
.titlebar span { margin-left: 5px; flex: 1; letter-spacing: .5px; }
.winbtns { width: 104px; height: 12px; }
.menu { height: 28px; flex: none; padding-left: 12px; display: grid; grid-template-columns: 54px 55px 56px 56px 52px 55px 81px 68px 60px 60px; align-items: center; background: linear-gradient(90deg, #efefef, #fafafa); white-space: nowrap; }
u { text-underline-offset: 1px; }

.bars { height: 26px; flex: none; display: flex; background: linear-gradient(90deg, #efefef, #fafafa); }
.bar { display: flex; align-items: center; height: 25px; background: linear-gradient(#fdfdfd, #efefef); padding-left: 5px; }
.main, .tools { height: 24px; }
.grip { width: 3px; height: 17px; margin-right: 2px; background: repeating-linear-gradient(#b4b4b4 0 2px, transparent 2px 5px); }
.t { width: 22px; height: 22px; flex: none; display: flex; align-items: center; justify-content: center; font-weight: normal; }
.t svg { width: 16px; height: 16px; }
.act { background: #dcebf7; border: 1px solid #0a79d0; }
.dis { color: #b2b2b2; }
.pale { color: #c4c4c4; }
.blue { color: #2862bd; }
.silver { color: #c2c4c2; }
.sep { width: 6px; height: 15px; background: linear-gradient(#b6b6b6, #b6b6b6) center / 1px 15px no-repeat; }
.s7 { width: 7px; }
.s5 { width: 5px; }
.drop { width: 11px; height: 4px; background: #111; clip-path: polygon(3px 0, 9px 0, 6px 3px); }
.drop.wide { width: 10px; clip-path: polygon(1px 0, 7px 0, 4px 3px); }
.drop.gray { background: #888; }
.over { width: 12px; height: 26px; align-self: flex-start; background: linear-gradient(#e9e9e9, #a4a4a4); position: relative; }
.over::before { content: ""; position: absolute; left: 3px; bottom: 8px; width: 6px; height: 1px; background: #000; }
.over::after { content: ""; position: absolute; left: 3px; bottom: 3px; border: 3px solid transparent; border-top-color: #000; border-bottom: 0; }
.over.more { background: linear-gradient(#000, #000) 3px 7px / 2px 2px no-repeat, linear-gradient(#000, #000) 7px 7px / 2px 2px no-repeat, linear-gradient(#f0f0f0, #a4a4a4); }
.combo { display: flex; align-items: center; background: #fff; border: 1px solid #777; height: 20px; }
.combo span { flex: 1; padding-left: 2px; }
.combo > svg:last-child { width: 10px; height: 10px; margin-right: 3px; color: #444; }
.scale { width: 149px; font-size: 11px; letter-spacing: .3px; margin-left: 1px; }
.pct { width: 60px; border-color: #ccc; color: #666; font-size: 10px; }
.pct > svg:last-child { color: #999; }
.layout { padding-right: 1px; }
.layout .act { border-color: #9bb9d2; }
.layout .over { margin-left: 1px; }
.bar.tools { padding-left: 5px; }
.tools .drop { width: 10px; }
.tools .drop + .t { margin-left: 2px; }
.lbl { white-space: nowrap; }
.editor { width: 440px; padding-left: 6px; }
.editor .lbl { width: 51px; margin-left: 3px; }
.editor .over { margin-left: auto; }
.editor .sm { width: 12px; }
.maps { flex: 1; padding-left: 4px; }
.maps .lbl { margin-left: 4px; }
.maps .sep { width: 6px; }
.maps .drop { width: 12px; }
.maps .over { margin-left: auto; }
.editor { margin-right: -1px; }
.maps .grip { margin-right: 3px; }

.work { height: 677px; flex: none; display: flex; }
.panel { display: flex; flex-direction: column; }
.left { width: 247px; }
.head { height: 22px; flex: none; background: linear-gradient(90deg, #bfcddd, #d9e5f1); display: flex; align-items: center; padding: 0 3px 0 4px; }
.head span { flex: 1; }
.head svg { width: 9px; height: 9px; margin-left: 7px; }
.ptools { height: 26px; flex: none; display: flex; align-items: center; padding-left: 4px; background: linear-gradient(#fbfbfb, #efefef); }
.toc { flex: 1; border: 1px solid #82828f; border-left-color: #ddd; background: #fff; display: flex; flex-direction: column; padding: 0 1px 2px 0; min-height: 0; margin-bottom: 1px; }
.rows { overflow: hidden; flex: 1; min-width: 0; }
.toc .rows { padding-top: 1px; }
.r { display: flex; align-items: center; white-space: nowrap; }
.toc .r { height: 20px; letter-spacing: .15px; }
.x { width: 9px; height: 9px; }
.c { width: 11px; height: 11px; margin: 0 8px; }
.a0 { padding-left: 8px; }
.a0 .i { margin: 0 5px 0 6px; }
.a1 { padding-left: 27px; }
.a2 { padding-left: 46px; }
.a3 { padding-left: 78px; }
.cad { padding-left: 101px; }
.hot { background: #0078d7; color: #fff; height: 20px; line-height: 20px; padding: 0 2px; margin-left: -2px; width: 42px; }
.sw { width: 15px; height: 11px; border: 1px solid #6e6e6e; background: #d0eafc; margin: 3px 4px 0 0; }
.cyan { background: #c5effa; }
.yel { border-color: #ff0; background: #fff; margin-right: 3px; }
.hs { height: 15px; flex: none; background: #f0f0f0; display: flex; align-items: center; padding: 0 3px; color: #555; }
.hs svg, .vs svg, .mapfoot .l, .mapfoot .rt { width: 10px; height: 10px; }
.l { transform: rotate(90deg); }
.rt { transform: rotate(-90deg); margin-left: auto; }
.u { transform: rotate(180deg); }
.hs i { width: 196px; height: 15px; background: #cdcdcd; margin-left: 5px; }

.map { width: 779px; margin: 1px 0 0 5px; border: 1px solid #828282; border-width: 1px 0 0 2px; display: grid; grid-template: 656px 19px / 759px 18px; }
.canvas { width: 759px; height: 656px; background: #fff; }
.vs { background: #f0f0f0; display: flex; flex-direction: column; align-items: center; color: #555; padding: 4px 0; }
.map .vs { border-left: 1px solid #ddd; padding: 4px 2px 3px 0; }
.map .vs i { width: 14px; height: 20px; background: #cdcdcd; margin: 348px 0 auto; }
.mapfoot { grid-column: 1 / 3; display: flex; align-items: center; color: #555; padding-right: 21px; height: 16px; border-top: 1px solid #ddd; }
.views { width: 68px; height: 15px; margin-right: 11px; }
.mapfoot i { width: 28px; height: 14px; background: #cdcdcd; margin-left: 368px; }

.right { width: 247px; margin-left: 5px; padding-right: 3px; }
.right .head { margin-right: -3px; }
.right .ptools { padding: 0 0 0 3px; margin-right: -3px; }
.right .t { width: 23px; }
.right .drop { width: 15px; clip-path: polygon(4px 0, 11px 0, 7.5px 4px); }
.right .list { width: 25px; }
.chevs { width: 9px; height: 7px; margin: 0 2px 9px auto; }
.loc { height: 24px; flex: none; display: flex; padding-left: 3px; }
.loc label { width: 51px; line-height: 23px; }
.loc .combo { flex: 1; height: 22px; padding-left: 2px; }
.loc .combo span { padding-left: 4px; }
.tree { height: 577px; flex: none; border: 1px solid #828282; border-width: 2px 0 0 2px; background: #fff; display: grid; grid-template: 559px 16px / 224px 16px; }
.tree .r { height: 17px; }
.tree .b2 { letter-spacing: .27px; }
.tree .x { margin-right: 6px; }
.tree .i { margin-right: 5px; }
.b0 { margin-left: -8px; }
.b1 { margin-left: -4px; }
.b2 { padding-left: 15px; }
.b3 { padding-left: 34px; }
.b4 { padding-left: 68px; }
.soft { background: #f0f0f0; padding-right: 2px; }
.tree .vs i { width: 15px; height: 207px; background: #cdcdcd; margin: 120px 0 auto; }
.tree .vs { padding-bottom: 3px; }
.tree .hs { grid-column: 1 / 3; padding-right: 19px; height: 16px; }
.tree .hs i { width: 88px; margin-left: 16px; }
.tabs { display: flex; margin-top: 5px; height: 21px; padding-left: 2px; }
.tabs span { width: 48.500px; flex: none; display: flex; align-items: center; border: 1px solid #999; border-width: 0 1px 1px 0; border-radius: 0 0 4px 4px; padding-left: 4px; color: #666; overflow: hidden; }
.tabs .i { margin-right: 3px; }
.tabs .blueish svg { color: #4e8ebb; }
.tabs .cur { background: #fff; color: #000; }
.status { flex: 1; display: flex; align-items: center; padding: 3px 1px 0 983px; }
.status span { flex: 1; letter-spacing: .3px; }
.status svg { width: 10px; height: 10px; }
```
